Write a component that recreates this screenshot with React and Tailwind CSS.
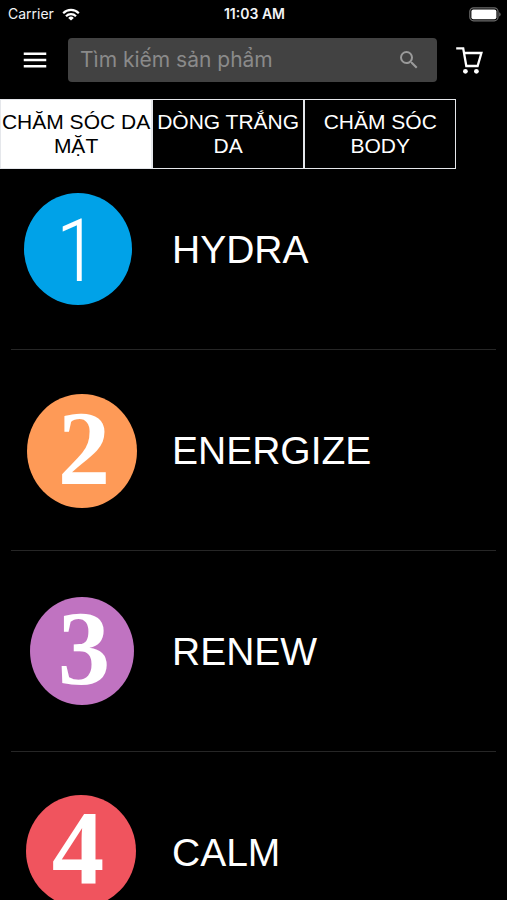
import clsx from "clsx";
import { useState } from "react";
import { MdMenu, MdSearch } from "react-icons/md";

const tabs = ["CHĂM SÓC DA MẶT", "DÒNG TRẮNG DA", "CHĂM SÓC BODY"];

const products = [
  {
    name: "HYDRA",
    digit: "1",
    color: "#00a2e8",
    cx: 58,
    cy: 60,
    rx: 54,
    ry: 56,
    textX: 57,
    textY: 92,
    textClass: "font-['Roboto_Condensed','Roboto',sans-serif] text-[88px] font-light",
  },
  {
    name: "ENERGIZE",
    digit: "2",
    color: "#fe9a57",
    cx: 62,
    cy: 61,
    rx: 55,
    ry: 57,
    textX: 64,
    textY: 94,
    textClass: "font-['Liberation_Serif',serif] text-[105px] font-bold",
  },
  {
    name: "RENEW",
    digit: "3",
    color: "#c073c1",
    cx: 62,
    cy: 60,
    rx: 52,
    ry: 54,
    textX: 64,
    textY: 93,
    textClass: "font-['Liberation_Serif',serif] text-[105px] font-bold",
  },
  {
    name: "CALM",
    digit: "4",
    color: "#f0545e",
    cx: 61,
    cy: 59,
    rx: 55,
    ry: 56,
    textX: 58,
    textY: 92,
    textClass: "font-['Liberation_Serif',serif] text-[105px] font-bold",
  },
];

const WifiIcon = () => (
  <svg viewBox="0 0 18 13" className="h-[13px] w-[18px]" aria-hidden="true">
    <g fill="none" stroke="white" strokeWidth="2.2">
      <path d="M1.2 5.2a11 11 0 0 1 15.6 0" />
      <path d="M4 8.2a7 7 0 0 1 10 0" />
    </g>
    <path d="M9 12.6 6.2 9.9a4 4 0 0 1 5.6 0z" fill="white" />
  </svg>
);

const BatteryIcon = () => (
  <svg viewBox="0 0 32 15" className="h-[15px] w-8" aria-hidden="true">
    <rect
      x="0.8"
      y="0.8"
      width="28.2"
      height="13"
      rx="3.8"
      fill="none"
      stroke="#6b6b6b"
      strokeWidth="1.2"
    />
    <rect x="2.4" y="2.4" width="25" height="9.8" rx="2" fill="white" />
    <path d="M30.2 5.2a2.4 2.4 0 0 1 0 4.4z" fill="#6b6b6b" />
  </svg>
);

const CartIcon = () => (
  <svg viewBox="0 0 28 28" className="h-7 w-7" aria-hidden="true">
    <path
      d="M1.2 2.4H8.2L11.3 20H22.6L26.4 7H9.2"
      fill="none"
      stroke="white"
      strokeWidth="2.3"
    />
    <circle cx="10.4" cy="25.3" r="2.4" fill="white" />
    <circle cx="21.4" cy="25.3" r="2.4" fill="white" />
  </svg>
);

const StatusBar = () => (
  <div className="grid h-7 grid-cols-3 items-center pl-2 pr-1.5 font-['Inter',sans-serif] text-sm text-gray-100">
    <div className="flex items-center gap-2">
      <span>Carrier</span>
      <WifiIcon />
    </div>
    <span className="text-center font-semibold">11:03 AM</span>
    <div className="flex justify-end">
      <BatteryIcon />
    </div>
  </div>
);

const Header = () => (
  <header className="flex items-center gap-[18px] pb-[17px] pl-5 pr-6 pt-2.5">
    <button aria-label="Menu">
      <MdMenu className="h-[30px] w-[30px]" />
    </button>
    <div className="flex h-11 min-w-0 flex-1 items-center rounded bg-[#424242] pl-3 pr-4">
      <input
        type="text"
        aria-label="Tìm kiếm sản phẩm"
        placeholder="Tìm kiếm sản phẩm"
        className="min-w-0 flex-1 bg-transparent font-['Inter',sans-serif] text-[21px] placeholder:text-[#8a8a8a] focus:outline-none"
      />
      <button aria-label="Search">
        <MdSearch className="h-6 w-6 text-[#9a9a9a]" />
      </button>
    </div>
    <button aria-label="Cart">
      <CartIcon />
    </button>
  </header>
);

const ProductRow = ({ product }) => (
  <li className="mx-[11px] border-b border-[#262626] py-5 first:pt-0">
    <a href="#" className="flex h-40 items-center gap-8 pl-[9px]">
      <svg viewBox="0 -10 120 140" className="h-[140px] w-[120px] shrink-0">
        <ellipse
          cx={product.cx}
          cy={product.cy}
          rx={product.rx}
          ry={product.ry}
          fill={product.color}
        />
        <text
          x={product.textX}
          y={product.textY}
          textAnchor="middle"
          fill="white"
          className={product.textClass}
        >
          {product.digit}
        </text>
      </svg>
      <span className="text-[39px] leading-none">{product.name}</span>
    </a>
  </li>
);

export default function App() {
  const [activeTab, setActiveTab] = useState(0);

  return (
    <div className="flex h-screen flex-col bg-black font-['Liberation_Sans',sans-serif] text-white">
      <StatusBar />
      <Header />

      <nav className="flex">
        {tabs.map((tab, index) => (
          <button
            key={tab}
            onClick={() => setActiveTab(index)}
            className={clsx(
              "w-[30%] border border-gray-200 py-2.5 text-[21px] leading-6",
              activeTab === index ? "bg-white text-black" : "bg-black"
            )}
          >
            {tab}
          </button>
        ))}
      </nav>

      <ul className="min-h-0 flex-1 overflow-y-auto [scrollbar-width:none]">
        {products.map((product) => (
          <ProductRow key={product.name} product={product} />
        ))}
      </ul>
    </div>
  );
}
